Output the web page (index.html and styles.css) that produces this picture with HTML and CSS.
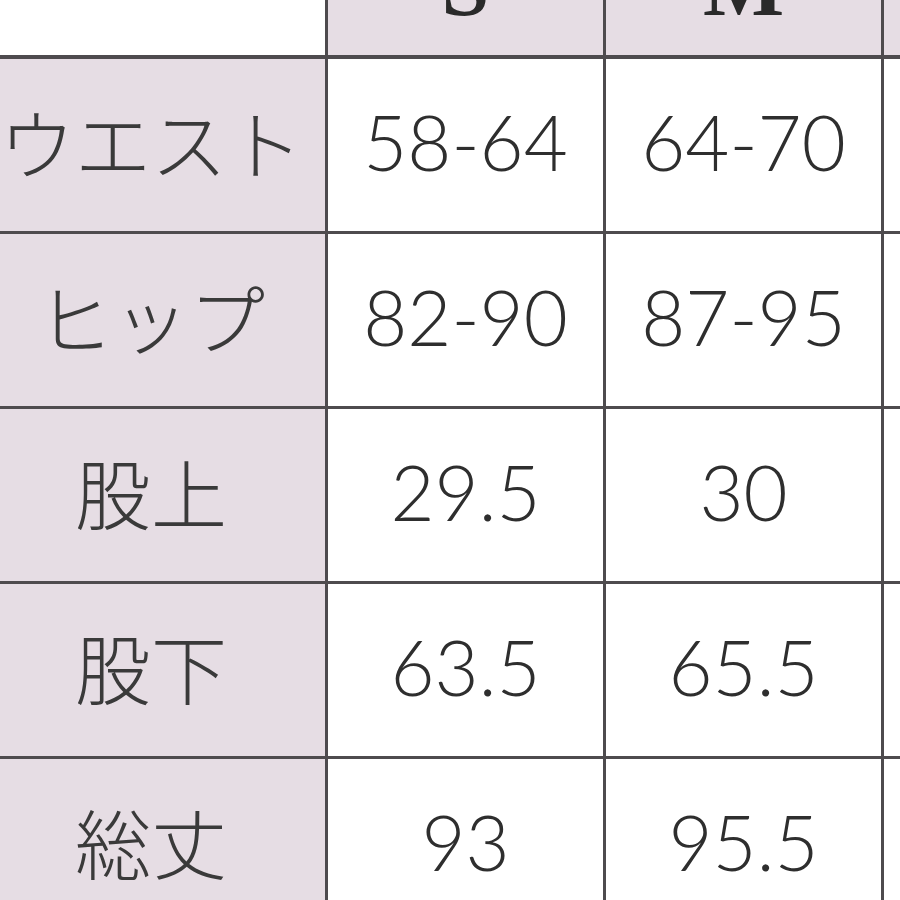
FILE: index.html
```html
<!DOCTYPE html>
<html lang="ja">
<head>
<meta charset="utf-8">
<title>サイズ表</title>
<link rel="stylesheet" href="styles.css">
</head>
<body>
<div class="frame">
  <table class="size-table">
    <colgroup>
      <col class="col-label">
      <col class="col-size">
      <col class="col-size">
      <col class="col-extra">
    </colgroup>
    <thead>
      <tr>
        <th class="corner"></th>
        <th class="size-head"><span>S</span></th>
        <th class="size-head"><span>M</span></th>
        <th class="size-head"></th>
      </tr>
    </thead>
    <tbody>
      <tr><th class="label">ウエスト</th><td>58-64</td><td>64-70</td><td></td></tr>
      <tr><th class="label">ヒップ</th><td>82-90</td><td>87-95</td><td></td></tr>
      <tr><th class="label">股上</th><td>29.5</td><td>30</td><td></td></tr>
      <tr><th class="label">股下</th><td>63.5</td><td>65.5</td><td></td></tr>
      <tr><th class="label">総丈</th><td>93</td><td>95.5</td><td></td></tr>
    </tbody>
  </table>
</div>
</body>
</html>
```

FILE: styles.css
```css
html, body {
  margin: 0;
  padding: 0;
  background: #ffffff;
}

body {
  width: 900px;
  height: 900px;
  overflow: hidden;
}

.frame {
  width: 900px;
  height: 900px;
  overflow: hidden;
}

.size-table {
  border-collapse: collapse;
  table-layout: fixed;
  width: 1110px;
  margin-left: -26px;
  margin-top: -120px;
  color: #3a3a3a;
}

.col-label { width: 351px; }
.col-size { width: 278px; }
.col-extra { width: 203px; }

.size-table th,
.size-table td {
  border: 3px solid #4e4b4e;
  text-align: center;
  vertical-align: middle;
}

.size-table thead th {
  height: 172px;
  padding: 0;
  border-bottom: 4px solid #4e4b4e;
  vertical-align: bottom;
}

.size-table tbody th,
.size-table tbody td {
  height: 164px;
  padding: 0 0 8px 0;
}

.corner {
  background: #ffffff;
  border-left: none !important;
  border-top: none !important;
}

.size-head {
  background: #e6dde4;
  font-family: "Liberation Serif", "Times New Roman", serif;
  font-weight: 700;
  font-size: 86px;
  color: #2a2a2a;
}

.size-head span {
  display: block;
  line-height: 86px;
  padding-bottom: 26px;
}

.label {
  background: #e6dde4;
  font-family: "Noto Sans CJK JP", "Noto Sans", sans-serif;
  font-weight: 300;
  font-size: 76px;
  color: #3a3a3a;
  white-space: nowrap;
}

.size-table td {
  font-family: "Lato", "Noto Sans", sans-serif;
  font-weight: 300;
  font-size: 76px;
  color: #2e2e2e;
  background: #ffffff;
}
```
